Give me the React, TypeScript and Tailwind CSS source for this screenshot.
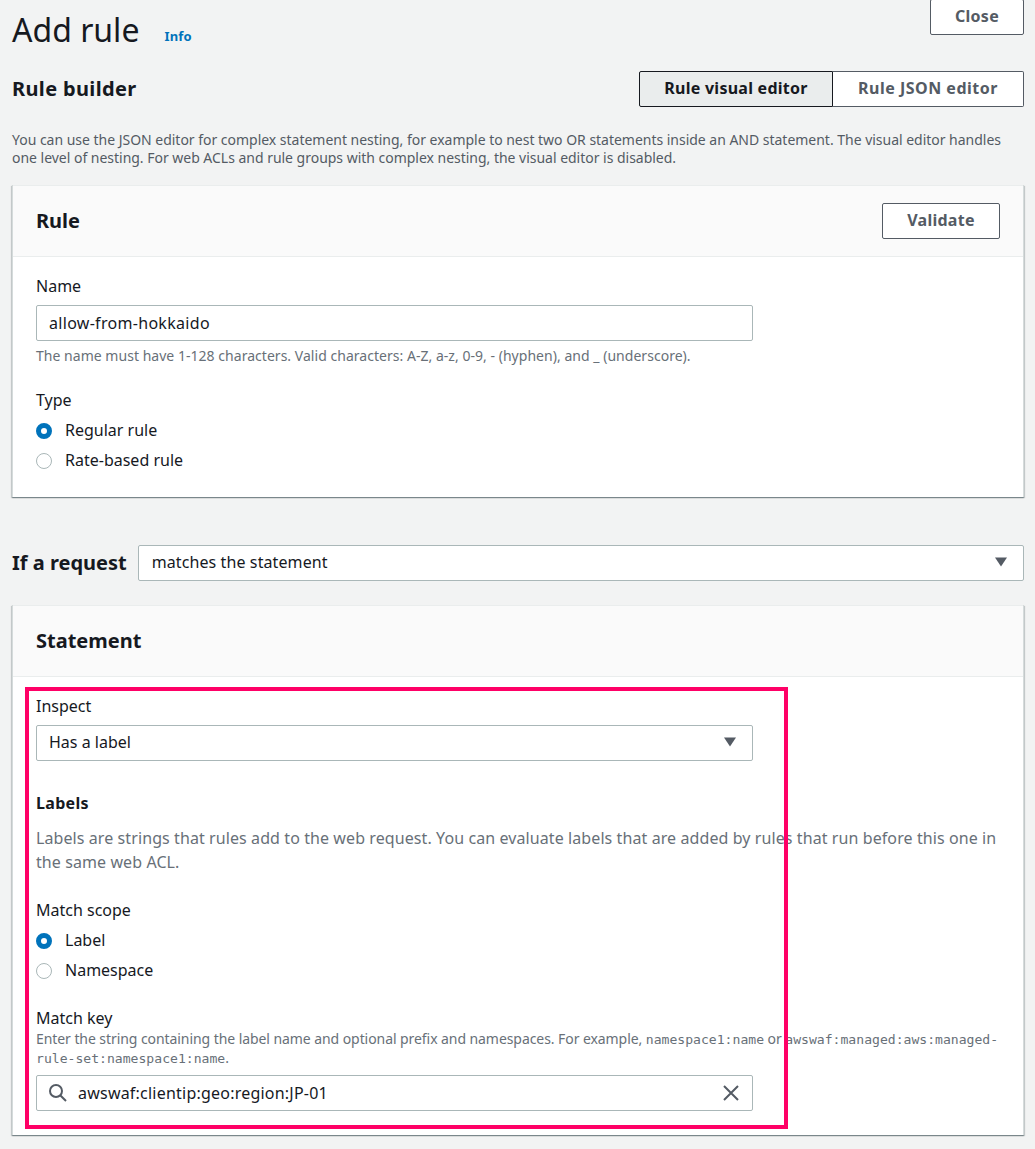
import React from "react";

const monoStyle = { fontFamily: '"DejaVu Sans Mono", monospace' };

function Radio({ checked, label }: { checked?: boolean; label: string }) {
  return (
    <div className="flex items-center h-[30px]">
      {checked ? (
        <span className="mt-0.5 w-4 h-4 rounded-full border-[5px] border-[#0073bb] bg-white" />
      ) : (
        <span className="mt-0.5 w-4 h-4 rounded-full border border-[#aab7b8] bg-white" />
      )}
      <span className="ml-[13px] text-[#16191f]">{label}</span>
    </div>
  );
}

function Caret() {
  return (
    <svg width="12" height="10" viewBox="0 0 12 10" className="shrink-0">
      <path d="M0 0.5 H12 L6 9.5 Z" fill="#545b64" />
    </svg>
  );
}

function Card({ title, action, children }: { title: string; action?: React.ReactNode; children: React.ReactNode }) {
  return (
    <section className="bg-white border-l border-r border-[#d5dbdb] shadow-[0_1px_1px_0_rgba(0,28,36,0.3),1px_1px_1px_0_rgba(0,28,36,0.15),-1px_1px_1px_0_rgba(0,28,36,0.15)]">
      <div className="h-[72px] flex items-center justify-between px-[23px] bg-[#fafafa] border-b border-t border-[#eaeded]">
        <h2 className="text-[20px] font-bold text-[#16191f] leading-[24px]">{title}</h2>
        {action}
      </div>
      {children}
    </section>
  );
}

export default function App() {
  return (
    <div
      className="relative w-[1035px] h-[1149px] overflow-hidden bg-[#f2f3f3] text-[16px] leading-[22px] text-[#16191f]"
      style={{ fontFamily: '"Noto Sans", sans-serif' }}
    >
      <div className="pl-3 pr-[11px] -mt-px">
        <div className="flex justify-between items-start h-[72px]">
          <div className="flex items-baseline pt-3">
            <h1 className="text-[32px] leading-[38px] font-normal text-[#16191f]">Add rule</h1>
            <a className="ml-[25px] -translate-y-px text-[13px] font-bold text-[#0073bb] tracking-[0.2px]">Info</a>
          </div>
          <button className="w-[94px] h-9 pb-0.5 bg-white border border-[#545b64] rounded-[2px] text-[#545b64] font-bold tracking-[0.25px]">
            Close
          </button>
        </div>

        <div className="flex justify-between items-center h-9">
          <h2 className="text-[20px] font-bold leading-[24px] tracking-[0.35px]">Rule builder</h2>
          <div className="flex h-9">
            <button className="w-[194px] pb-0.5 bg-[#eaeded] border border-[#16191f] rounded-l-[2px] text-[#16191f] font-bold tracking-[0.25px]">
              Rule visual editor
            </button>
            <button className="w-[191px] pb-0.5 bg-white border border-l-0 border-[#545b64] rounded-r-[2px] text-[#545b64] font-bold tracking-[0.5px]">
              Rule JSON editor
            </button>
          </div>
        </div>

        <p className="mt-[24px] text-[14px] leading-[18px] text-[#545b64] tracking-[-0.02px]">
          You can use the JSON editor for complex statement nesting, for example to nest two OR statements inside an AND statement. The visual editor handles
          <br />
          one level of nesting. For web ACLs and rule groups with complex nesting, the visual editor is disabled.
        </p>

        <div className="mt-[18px]">
          <Card
            title="Rule"
            action={
              <button className="w-[118px] h-9 pb-0.5 bg-white border border-[#545b64] rounded-[2px] text-[#545b64] font-bold tracking-[0.25px]">
                Validate
              </button>
            }
          >
            <div className="pl-[23px] pt-[18px] h-[240px]">
              <div>Name</div>
              <div className="mt-[8px] w-[717px] h-9 border border-[#aab7b8] rounded-[2px] px-3 flex items-center bg-white tracking-[0.3px]">
                allow-from-hokkaido
              </div>
              <div className="mt-[6px] text-[14px] leading-[18px] text-[#687078] tracking-[0.03px]">
                The name must have 1-128 characters. Valid characters: A-Z, a-z, 0-9, - (hyphen), and _ (underscore).
              </div>
              <div className="mt-6">Type</div>
              <div className="mt-[4px]">
                <Radio checked label="Regular rule" />
                <Radio label="Rate-based rule" />
              </div>
            </div>
          </Card>
        </div>

        <div className="mt-12 flex items-center h-9">
          <span className="text-[20px] font-bold leading-[24px] mr-[11px]">If a request</span>
          <div className="flex-1 h-9 pb-0.5 bg-white border border-[#aab7b8] rounded-[2px] pl-[13px] pr-[16px] flex items-center justify-between">
            <span className="tracking-[0.1px]">matches the statement</span>
            <Caret />
          </div>
        </div>

        <div className="mt-[24px]">
          <Card title="Statement">
            <div className="px-[23px] pt-[18px] h-[458px]">
              <div>Inspect</div>
              <div className="mt-[8px] w-[717px] h-9 pb-0.5 bg-white border border-[#aab7b8] rounded-[2px] pl-3 pr-[16px] flex items-center justify-between">
                <span>Has a label</span>
                <Caret />
              </div>
              <h3 className="mt-[31px] font-bold tracking-[0.3px]">Labels</h3>
              <p className="mt-[12px] leading-[24px] text-[#687078] tracking-[0.09px]">
                Labels are strings that rules add to the web request. You can evaluate labels that are added by rules that run before this one in
                <br />
                the same web ACL.
              </p>
              <div className="mt-[25px]">Match scope</div>
              <div className="mt-[4px]">
                <Radio checked label="Label" />
                <Radio label="Namespace" />
              </div>
              <div className="mt-[22px]">Match key</div>
              <div className="mt-px text-[14px] leading-[18px] text-[#687078] whitespace-nowrap tracking-[-0.07px]">
                Enter the string containing the label name and optional prefix and namespaces. For example,{" "}
                <code className="text-[13.1px] tracking-normal" style={monoStyle}>namespace1:name</code> or{" "}
                <code className="text-[13.1px] tracking-normal" style={monoStyle}>awswaf:managed:aws:managed-</code>
                <br />
                <code className="text-[13.1px] tracking-normal" style={monoStyle}>rule-set:namespace1:name</code>.
              </div>
              <div className="mt-[7px] w-[717px] h-9 bg-white border border-[#aab7b8] rounded-[2px] pl-3 pr-[13px] flex items-center">
                <svg width="18" height="18" viewBox="0 0 18 18" fill="none" stroke="#545b64" strokeWidth="2" className="shrink-0">
                  <circle cx="7" cy="7" r="6" />
                  <path d="M11.2 11.2 L17 17" />
                </svg>
                <span className="ml-[11px] flex-1 tracking-[0.22px]">awswaf:clientip:geo:region:JP-01</span>
                <svg width="16" height="16" viewBox="0 0 16 16" fill="none" stroke="#545b64" strokeWidth="2" className="shrink-0">
                  <path d="M1 1 L15 15 M15 1 L1 15" />
                </svg>
              </div>
            </div>
          </Card>
        </div>
      </div>

      <div className="absolute left-[25px] top-[687px] w-[763px] h-[442px] border-4 border-[#ff0066] pointer-events-none" />
    </div>
  );
}
